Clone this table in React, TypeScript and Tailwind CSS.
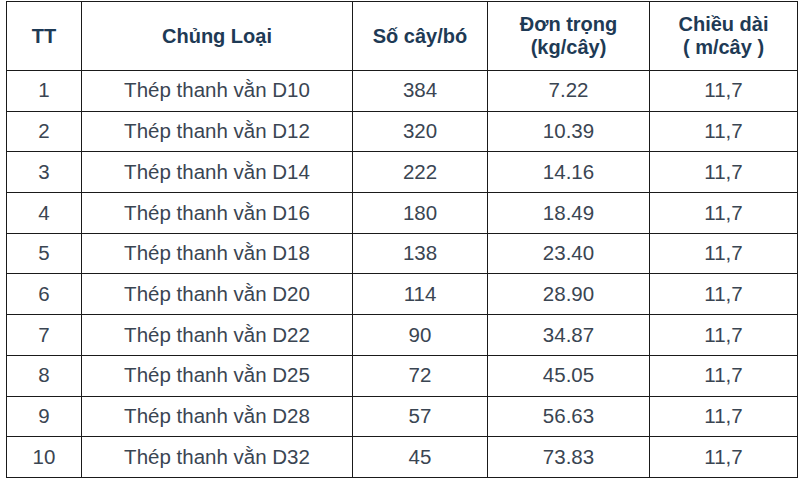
import React from "react";

const rows = [
  ["1", "Thép thanh vằn D10", "384", "7.22", "11,7"],
  ["2", "Thép thanh vằn D12", "320", "10.39", "11,7"],
  ["3", "Thép thanh vằn D14", "222", "14.16", "11,7"],
  ["4", "Thép thanh vằn D16", "180", "18.49", "11,7"],
  ["5", "Thép thanh vằn D18", "138", "23.40", "11,7"],
  ["6", "Thép thanh vằn D20", "114", "28.90", "11,7"],
  ["7", "Thép thanh vằn D22", "90", "34.87", "11,7"],
  ["8", "Thép thanh vằn D25", "72", "45.05", "11,7"],
  ["9", "Thép thanh vằn D28", "57", "56.63", "11,7"],
  ["10", "Thép thanh vằn D32", "45", "73.83", "11,7"],
];

export default function App() {
  return (
    <div className="w-[800px] h-[481px] bg-white overflow-hidden pt-[1px] pl-[6px]" style={{ fontFamily: '"Liberation Sans", Arial, sans-serif' }}>
      <table className="border-collapse w-[791px] table-fixed">
        <colgroup>
          <col className="w-[75px]" />
          <col className="w-[271px]" />
          <col className="w-[135px]" />
          <col className="w-[162px]" />
          <col className="w-[148px]" />
        </colgroup>
        <thead>
          <tr className="h-[69px]">
            {["TT", "Chủng Loại", "Số cây/bó"].map((h) => (
              <th key={h} className="border-[1.5px] border-[#1a1a1a] text-[20px] font-bold text-[#1e3a55] text-center align-middle leading-[23px] p-0">
                {h}
              </th>
            ))}
            <th className="border-[1.5px] border-[#1a1a1a] text-[20px] font-bold text-[#1e3a55] text-center align-middle leading-[23px] p-0">
              Đơn trọng
              <br />
              (kg/cây)
            </th>
            <th className="border-[1.5px] border-[#1a1a1a] text-[20px] font-bold text-[#1e3a55] text-center align-middle leading-[23px] p-0">
              Chiều dài
              <br />( m/cây )
            </th>
          </tr>
        </thead>
        <tbody>
          {rows.map((r) => (
            <tr key={r[0]} className="h-[40.7px]">
              {r.map((c, i) => (
                <td key={i} className="border-[1.5px] border-[#1a1a1a] text-[20.5px] text-[#3a4552] text-center align-middle p-0">
                  {c}
                </td>
              ))}
            </tr>
          ))}
        </tbody>
      </table>
    </div>
  );
}
